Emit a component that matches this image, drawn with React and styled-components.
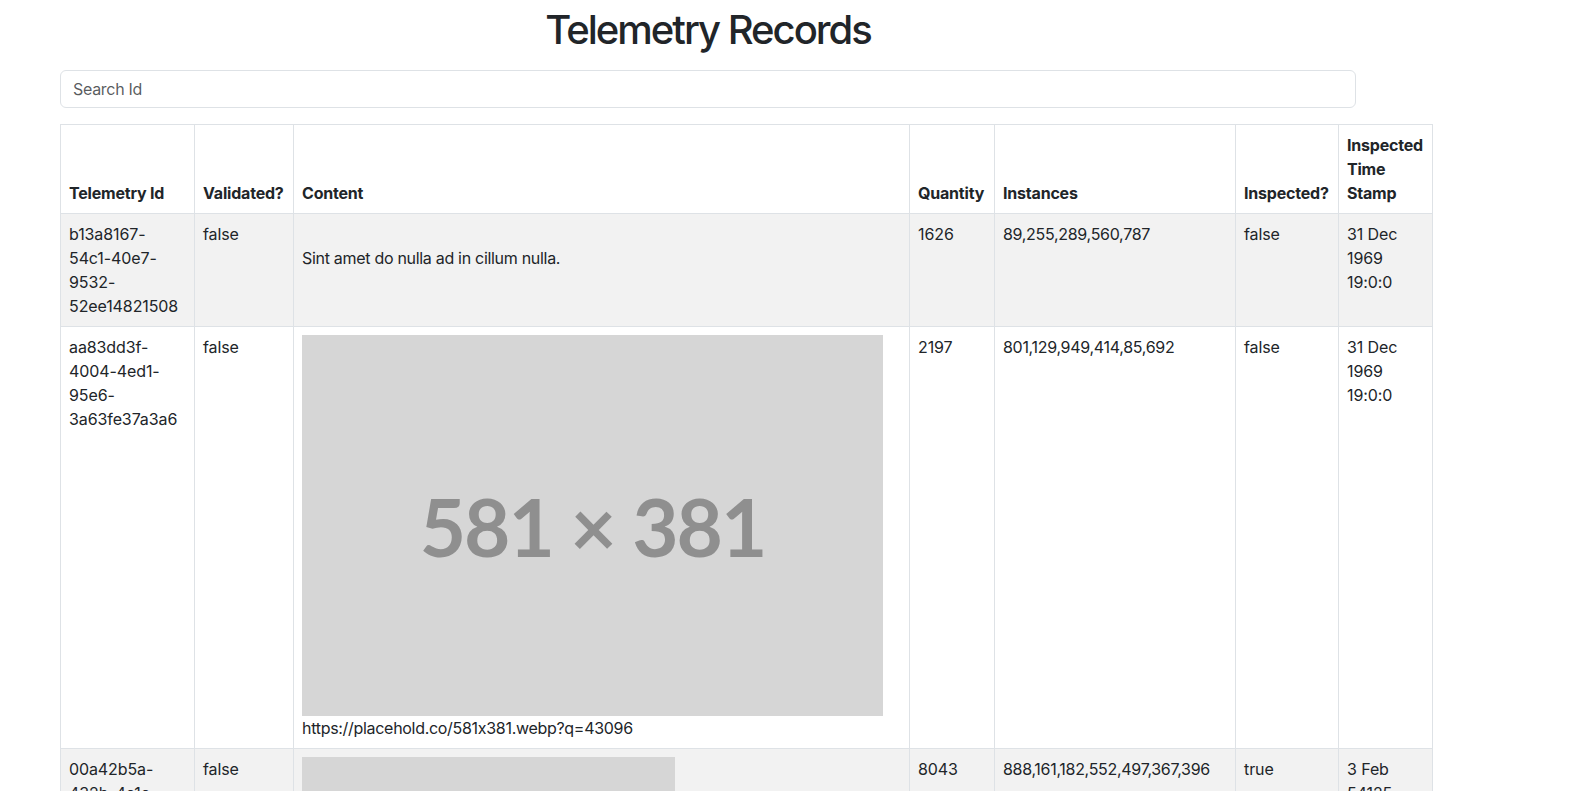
import React from 'react';
import styled, { createGlobalStyle } from 'styled-components';

const GlobalStyle = createGlobalStyle`
  *, *::before, *::after { box-sizing: border-box; }
  body {
    margin: 0;
    font-family: Inter, "Liberation Sans", sans-serif;
    font-size: 16px;
    line-height: 1.5;
    font-feature-settings: "calt" 0;
    color: #212529;
    background: #fff;
  }
`;

const Page = styled.main`
  width: 1296px;
  margin-left: 60px;
  padding-top: 6px;
`;

const Title = styled.h1`
  margin: 0 0 16px;
  font-size: 40px;
  font-weight: 500;
  line-height: 1.2;
  letter-spacing: -2px;
  text-align: center;
`;

const SearchInput = styled.input`
  display: block;
  width: 100%;
  height: 38px;
  margin: 0 0 16px;
  padding: 6px 12px;
  font: inherit;
  letter-spacing: -0.3px;
  color: #212529;
  border: 1px solid #dee2e6;
  border-radius: 6px;
  background: #fff;
  outline: none;
  &::placeholder { color: rgba(33, 37, 41, 0.75); }
`;

const Table = styled.table`
  width: 1372px;
  table-layout: fixed;
  border-collapse: collapse;
  border: 1px solid #dee2e6;
`;

const HeadCell = styled.th`
  padding: 8px;
  text-align: left;
  vertical-align: bottom;
  font-weight: 700;
  letter-spacing: -0.2px;
  border: 1px solid #dee2e6;
  background: #fff;
`;

const Row = styled.tr`
  background: ${(p) => (p.$striped ? '#f2f2f2' : '#fff')};
`;

const Cell = styled.td`
  padding: 8px;
  vertical-align: top;
  border: 1px solid #dee2e6;
  word-wrap: break-word;
  letter-spacing: ${(p) => (p.$tight ? '-0.3px' : '-0.1px')};
`;

const MissingImage = styled.span`
  display: block;
  height: 24px;
`;

const Placeholder = styled.div`
  display: flex;
  align-items: center;
  justify-content: center;
  background: #d6d6d6;
  color: #8f8f8f;
  font-family: Lato, "Open Sans", sans-serif;
  font-weight: 700;
  line-height: 1;
  letter-spacing: -2px;
  white-space: nowrap;
`;

const columns = [
  { label: 'Telemetry Id', width: 134 },
  { label: 'Validated?', width: 99 },
  { label: 'Content', width: 616 },
  { label: 'Quantity', width: 85 },
  { label: 'Instances', width: 241 },
  { label: 'Inspected?', width: 103 },
  { label: 'Inspected Time Stamp', width: 94 },
];

const rows = [
  {
    id: 'b13a8167-54c1-40e7-9532-52ee14821508',
    validated: 'false',
    text: 'Sint amet do nulla ad in cillum nulla.',
    quantity: 1626,
    instances: '89,255,289,560,787',
    inspected: 'false',
    stamp: '31 Dec 1969 19:0:0',
  },
  {
    id: 'aa83dd3f-4004-4ed1-95e6-3a63fe37a3a6',
    validated: 'false',
    image: { w: 581, h: 381, font: 80 },
    text: 'https://placehold.co/581x381.webp?q=43096',
    quantity: 2197,
    instances: '801,129,949,414,85,692',
    inspected: 'false',
    stamp: '31 Dec 1969 19:0:0',
  },
  {
    id: '00a42b5a-432b-4c1c-8d3e-7f19c2b6a041',
    validated: 'false',
    image: { w: 373, h: 262, font: 54 },
    text: 'https://placehold.co/373x262.webp?q=71804',
    quantity: 8043,
    instances: '888,161,182,552,497,367,396',
    inspected: 'true',
    stamp: '3 Feb 54125 6:13:20',
  },
];

function Content({ row }) {
  return (
    <>
      {row.image ? (
        <Placeholder
          style={{ width: row.image.w, height: row.image.h, fontSize: row.image.font }}
        >
          {row.image.w} × {row.image.h}
        </Placeholder>
      ) : (
        <MissingImage />
      )}
      {row.text}
    </>
  );
}

export default function App() {
  return (
    <>
      <GlobalStyle />
      <Page>
        <Title>Telemetry Records</Title>
        <SearchInput type="text" placeholder="Search Id" />
        <Table>
          <colgroup>
            {columns.map((c) => (
              <col key={c.label} style={{ width: c.width }} />
            ))}
          </colgroup>
          <thead>
            <tr>
              {columns.map((c) => (
                <HeadCell key={c.label}>{c.label}</HeadCell>
              ))}
            </tr>
          </thead>
          <tbody>
            {rows.map((r, i) => (
              <Row key={r.id} $striped={i % 2 === 0}>
                <Cell>{r.id}</Cell>
                <Cell>{r.validated}</Cell>
                <Cell $tight>
                  <Content row={r} />
                </Cell>
                <Cell>{r.quantity}</Cell>
                <Cell $tight>{r.instances}</Cell>
                <Cell>{r.inspected}</Cell>
                <Cell>{r.stamp}</Cell>
              </Row>
            ))}
          </tbody>
        </Table>
      </Page>
    </>
  );
}
